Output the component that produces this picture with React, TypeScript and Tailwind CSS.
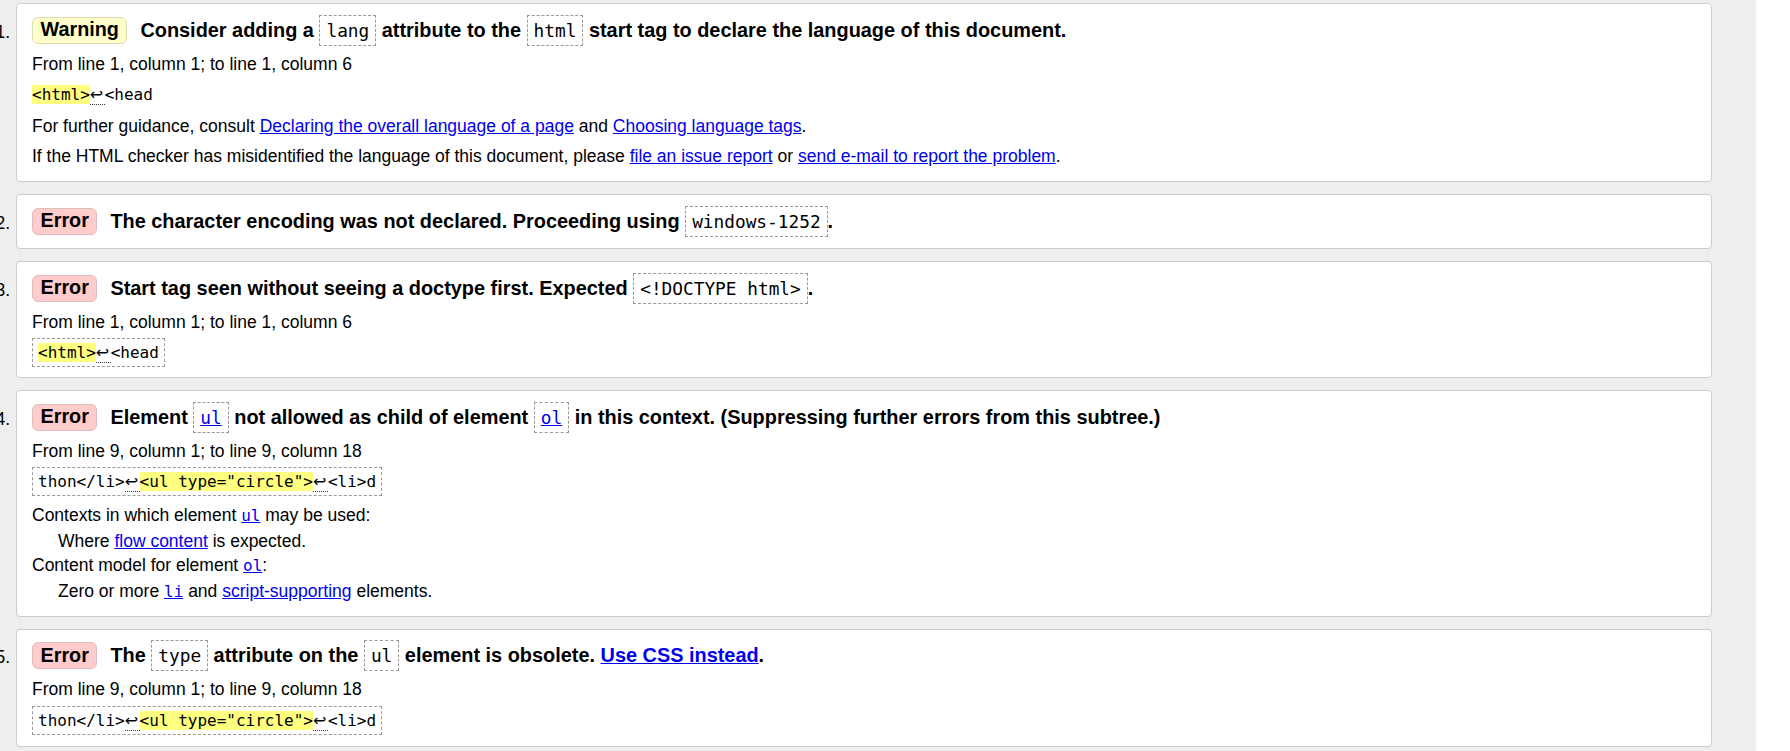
import React from "react";

const sans = "font-['Liberation_Sans',Arial,sans-serif]";
const mono = "font-['DejaVu_Sans_Mono',monospace]";

function Chip({ children, link = false }: { children: React.ReactNode; link?: boolean }) {
  return (
    <span
      className={`${mono} font-normal text-[17.8px] border border-dashed border-[#999] px-[6px] py-[4px] ${
        link ? "text-[#0000ee] underline" : "text-black"
      }`}
    >
      {children}
    </span>
  );
}

function Lf() {
  return (
    <span className="font-['DejaVu_Sans',sans-serif] text-[16px] pr-[1.5px] border-b border-dotted border-[#333]">
      ↩
    </span>
  );
}

function Hl({ children }: { children: React.ReactNode }) {
  return <span className="bg-[#ffff80]">{children}</span>;
}

function Extract({ children, boxed = true }: { children: React.ReactNode; boxed?: boolean }) {
  return (
    <span
      className={`${mono} text-[16px] whitespace-pre ${
        boxed ? "border border-dashed border-[#999] px-[5px] py-[4px]" : ""
      }`}
    >
      {children}
    </span>
  );
}

function A({ children, code = false }: { children: React.ReactNode; code?: boolean }) {
  return (
    <a href="#" className={`text-[#0000ee] underline ${code ? mono + " text-[16px]" : ""}`}>
      {children}
    </a>
  );
}

function Badge({ kind }: { kind: "Warning" | "Error" }) {
  const cls =
    kind === "Warning"
      ? "bg-[#ffffcc] border-[#dcdcb4]"
      : "bg-[#ffcccc] border-[#e0bcbc]";
  return (
    <span
      className={`shrink-0 h-[27px] flex items-center px-[7.5px] rounded-[6px] border ${cls} font-bold text-[19.8px] leading-none text-black`}
    >
      {kind}
    </span>
  );
}

function Item({
  n,
  kind,
  title,
  children,
  bodyPb = "pb-[2px]",
}: {
  n: number;
  kind: "Warning" | "Error";
  title: React.ReactNode;
  children?: React.ReactNode;
  bodyPb?: string;
}) {
  return (
    <li className="flex">
      <div className="w-[16px] shrink-0 flex justify-end pr-[6px] pt-[17.5px] leading-[22px] text-[17.5px] whitespace-nowrap">
        {n}.
      </div>
      <div className="flex-1 bg-white border border-[#cdcdcd] rounded-[4px] pt-[11px] pb-[12px] px-[15px]">
        <div className="flex items-center h-[30px]">
          <Badge kind={kind} />
          <span className="ml-[13px] font-bold text-[19.9px] leading-[30px] text-black whitespace-nowrap">
            {title}
          </span>
        </div>
        {children ? <div className={bodyPb}>{children}</div> : null}
      </div>
    </li>
  );
}

function Line({ children, first = false }: { children: React.ReactNode; first?: boolean }) {
  return <div className={`${first ? "mt-[7.5px]" : "mt-[8.6px]"} leading-[22px]`}>{children}</div>;
}

export default function App() {
  return (
    <div className={`flex h-[751px] w-[1790px] overflow-hidden bg-white ${sans} text-[17.5px] text-black`}>
      <div className="w-[1756px] shrink-0 bg-[#eeeeee] pr-[44px] pt-[3px] overflow-hidden">
        <ol className="flex flex-col gap-[12px]">
          <Item
            n={1}
            kind="Warning"
            title={
              <>
                Consider adding a <Chip>lang</Chip> attribute to the <Chip>html</Chip> start tag to declare the
                language of this document.
              </>
            }
          >
            <Line first>From line 1, column 1; to line 1, column 6</Line>
            <Line>
              <Extract boxed={false}>
                <Hl>{"<html>"}</Hl>
                <Lf />
                {"<head"}
              </Extract>
            </Line>
            <Line>
              For further guidance, consult <A>Declaring the overall language of a page</A> and{" "}
              <A>Choosing language tags</A>.
            </Line>
            <Line>
              If the HTML checker has misidentified the language of this document, please{" "}
              <A>file an issue report</A> or <A>send e-mail to report the problem</A>.
            </Line>
          </Item>

          <Item
            n={2}
            kind="Error"
            title={
              <>
                The character encoding was not declared. Proceeding using <Chip>windows-1252</Chip>.
              </>
            }
          />

          <Item
            n={3}
            kind="Error"
            bodyPb="pb-[1px]"
            title={
              <>
                Start tag seen without seeing a doctype first. Expected <Chip>{"<!DOCTYPE html>"}</Chip>.
              </>
            }
          >
            <Line first>From line 1, column 1; to line 1, column 6</Line>
            <Line>
              <Extract>
                <Hl>{"<html>"}</Hl>
                <Lf />
                {"<head"}
              </Extract>
            </Line>
          </Item>

          <Item
            n={4}
            kind="Error"
            bodyPb="pb-[1px]"
            title={
              <>
                Element <Chip link>ul</Chip> not allowed as child of element <Chip link>ol</Chip> in this context.
                (Suppressing further errors from this subtree.)
              </>
            }
          >
            <Line first>From line 9, column 1; to line 9, column 18</Line>
            <Line>
              <Extract>
                {"thon</li>"}
                <Lf />
                <Hl>{'<ul type="circle">'}</Hl>
                <Lf />
                {"<li>d"}
              </Extract>
            </Line>
            <div className="mt-[11px] flex flex-col gap-[2.5px] leading-[22px]">
              <div>
                Contexts in which element <A code>ul</A> may be used:
              </div>
              <div className="pl-[26px]">
                Where <A>flow content</A> is expected.
              </div>
              <div>
                Content model for element <A code>ol</A>:
              </div>
              <div className="pl-[26px]">
                Zero or more <A code>li</A> and <A>script-supporting</A> elements.
              </div>
            </div>
          </Item>

          <Item
            n={5}
            kind="Error"
            title={
              <>
                The <Chip>type</Chip> attribute on the <Chip>ul</Chip> element is obsolete.{" "}
                <a href="#" className="text-[#0000ee] underline">
                  Use CSS instead
                </a>
                .
              </>
            }
          >
            <Line first>From line 9, column 1; to line 9, column 18</Line>
            <Line>
              <Extract>
                {"thon</li>"}
                <Lf />
                <Hl>{'<ul type="circle">'}</Hl>
                <Lf />
                {"<li>d"}
              </Extract>
            </Line>
          </Item>
        </ol>
      </div>
      <div className="flex-1 bg-white" />
    </div>
  );
}
